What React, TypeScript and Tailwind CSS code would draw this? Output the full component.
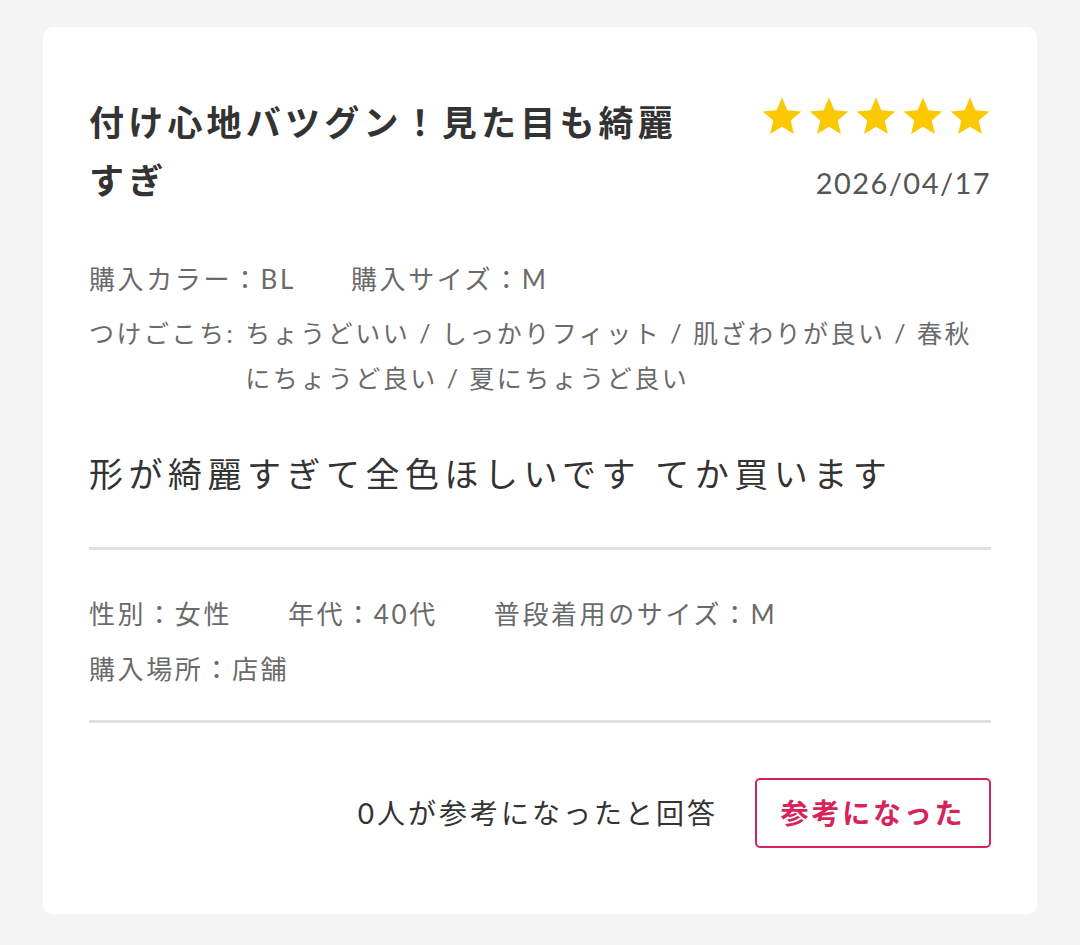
import React from "react";

const Star = () => (
  <svg width="42" height="40" viewBox="0 0 24 23" className="block">
    <path
      d="M12 0.8l3.1 7.4 8 0.65-6.1 5.25 1.85 7.8L12 17.7l-6.85 4.2 1.85-7.8L0.9 8.85l8-0.65z"
      fill="#fcc800"
    />
  </svg>
);

export default function App() {
  const font = { fontFamily: "'Lato', 'Noto Sans CJK JP', sans-serif" };
  return (
    <div className="min-h-[945px] w-full bg-[#f4f4f4] px-[43px] pt-[27px] pb-[32px]" style={font}>
      <div className="rounded-[10px] bg-white px-[46px] pt-[66px] pb-[66px]">
        {/* header */}
        <div className="flex items-start justify-between">
          <h1 className="w-[600px] text-[35px] font-bold leading-[58px] tracking-[0.12em] text-[#333]">
            付け心地バツグン！見た目も綺麗すぎ
          </h1>
          <div className="flex flex-col items-end">
            <div className="mt-[3px] flex gap-[5px]">
              <Star />
              <Star />
              <Star />
              <Star />
              <Star />
            </div>
            <div className="mt-[27px] text-[29px] leading-[40px] tracking-[0.05em] text-[#555]">
              2026/04/17
            </div>
          </div>
        </div>

        {/* purchase info */}
        <div className="mt-[48px] flex flex-col gap-[9px] leading-[45px] text-[#6a6a6a]">
          <div className="flex gap-[55px] text-[26px] tracking-[0.1em]">
            <span>購入カラー：BL</span>
            <span>購入サイズ：M</span>
          </div>
          <div className="flex text-[25px] tracking-[0.1em]">
            <span className="shrink-0 pr-[10px]">つけごこち:</span>
            <span className="flex-1">
              ちょうどいい / しっかりフィット / 肌ざわりが良い / 春秋にちょうど良い / 夏にちょうど良い
            </span>
          </div>
        </div>

        {/* comment */}
        <p className="mt-[46px] text-[34px] leading-[54px] tracking-[5.5px] text-[#333]">
          形が綺麗すぎて全色ほしいです てか買います
        </p>

        <div className="mt-[46px] h-[3px] bg-[#e0e0e0]" />

        {/* meta */}
        <div className="mt-[42px] flex flex-col gap-[10px] text-[26px] leading-[45px] tracking-[0.1em] text-[#6a6a6a]">
          <div className="flex gap-[56px]">
            <span>性別：女性</span>
            <span>年代：40代</span>
            <span>普段着用のサイズ：M</span>
          </div>
          <div>購入場所：店舗</div>
        </div>

        <div className="mt-[28px] h-[3px] bg-[#e0e0e0]" />

        {/* footer */}
        <div className="mt-[55px] flex items-center justify-end gap-[37px]">
          <span className="text-[28px] tracking-[3px] text-[#333]">0人が参考になったと回答</span>
          <button className="flex h-[70px] w-[236px] items-center justify-center rounded-[5px] border-2 border-[#d6245a] bg-white text-[28px] font-bold tracking-[0.1em] text-[#d6245a]">
            参考になった
          </button>
        </div>
      </div>
    </div>
  );
}
